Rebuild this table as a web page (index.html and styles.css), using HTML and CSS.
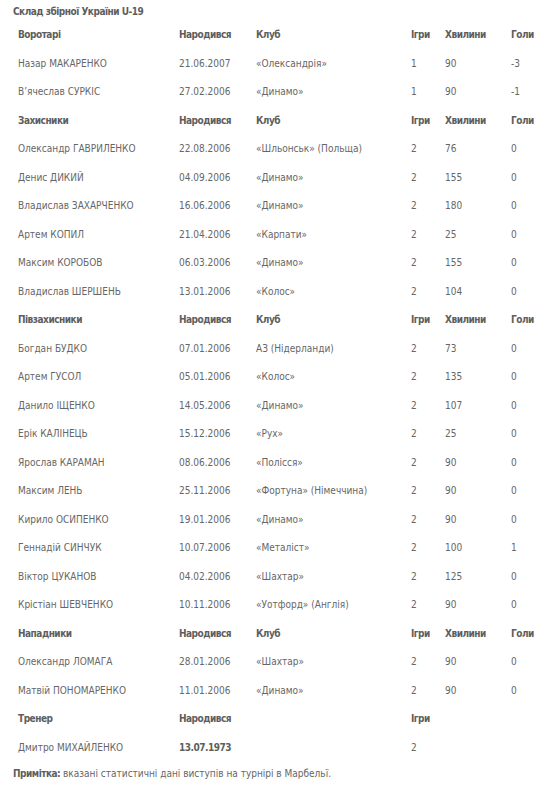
FILE: index.html
```html
<!DOCTYPE html>
<html lang="uk">
<head>
<meta charset="utf-8">
<link rel="stylesheet" href="styles.css">
</head>
<body>
<div class="page">
  <div class="title">Склад збірної України U-19</div>
  <div class="squad">
    <div class="row head"><span>Воротарі</span><span>Народився</span><span>Клуб</span><span>Ігри</span><span>Хвилини</span><span>Голи</span></div>
    <div class="row"><span>Назар МАКАРЕНКО</span><span>21.06.2007</span><span>«Олександрія»</span><span>1</span><span>90</span><span>-3</span></div>
    <div class="row"><span>В’ячеслав СУРКІС</span><span>27.02.2006</span><span>«Динамо»</span><span>1</span><span>90</span><span>-1</span></div>
    <div class="row head"><span>Захисники</span><span>Народився</span><span>Клуб</span><span>Ігри</span><span>Хвилини</span><span>Голи</span></div>
    <div class="row"><span>Олександр ГАВРИЛЕНКО</span><span>22.08.2006</span><span>«Шльонськ» (Польща)</span><span>2</span><span>76</span><span>0</span></div>
    <div class="row"><span>Денис ДИКИЙ</span><span>04.09.2006</span><span>«Динамо»</span><span>2</span><span>155</span><span>0</span></div>
    <div class="row"><span>Владислав ЗАХАРЧЕНКО</span><span>16.06.2006</span><span>«Динамо»</span><span>2</span><span>180</span><span>0</span></div>
    <div class="row"><span>Артем КОПИЛ</span><span>21.04.2006</span><span>«Карпати»</span><span>2</span><span>25</span><span>0</span></div>
    <div class="row"><span>Максим КОРОБОВ</span><span>06.03.2006</span><span>«Динамо»</span><span>2</span><span>155</span><span>0</span></div>
    <div class="row"><span>Владислав ШЕРШЕНЬ</span><span>13.01.2006</span><span>«Колос»</span><span>2</span><span>104</span><span>0</span></div>
    <div class="row head"><span>Півзахисники</span><span>Народився</span><span>Клуб</span><span>Ігри</span><span>Хвилини</span><span>Голи</span></div>
    <div class="row"><span>Богдан БУДКО</span><span>07.01.2006</span><span>АЗ (Нідерланди)</span><span>2</span><span>73</span><span>0</span></div>
    <div class="row"><span>Артем ГУСОЛ</span><span>05.01.2006</span><span>«Колос»</span><span>2</span><span>135</span><span>0</span></div>
    <div class="row"><span>Данило ІЩЕНКО</span><span>14.05.2006</span><span>«Динамо»</span><span>2</span><span>107</span><span>0</span></div>
    <div class="row"><span>Ерік КАЛІНЕЦЬ</span><span>15.12.2006</span><span>«Рух»</span><span>2</span><span>25</span><span>0</span></div>
    <div class="row"><span>Ярослав КАРАМАН</span><span>08.06.2006</span><span>«Полісся»</span><span>2</span><span>90</span><span>0</span></div>
    <div class="row"><span>Максим ЛЕНЬ</span><span>25.11.2006</span><span>«Фортуна» (Німеччина)</span><span>2</span><span>90</span><span>0</span></div>
    <div class="row"><span>Кирило ОСИПЕНКО</span><span>19.01.2006</span><span>«Динамо»</span><span>2</span><span>90</span><span>0</span></div>
    <div class="row"><span>Геннадій СИНЧУК</span><span>10.07.2006</span><span>«Металіст»</span><span>2</span><span>100</span><span>1</span></div>
    <div class="row"><span>Віктор ЦУКАНОВ</span><span>04.02.2006</span><span>«Шахтар»</span><span>2</span><span>125</span><span>0</span></div>
    <div class="row"><span>Крістіан ШЕВЧЕНКО</span><span>10.11.2006</span><span>«Уотфорд» (Англія)</span><span>2</span><span>90</span><span>0</span></div>
    <div class="row head"><span>Нападники</span><span>Народився</span><span>Клуб</span><span>Ігри</span><span>Хвилини</span><span>Голи</span></div>
    <div class="row"><span>Олександр ЛОМАГА</span><span>28.01.2006</span><span>«Шахтар»</span><span>2</span><span>90</span><span>0</span></div>
    <div class="row"><span>Матвій ПОНОМАРЕНКО</span><span>11.01.2006</span><span>«Динамо»</span><span>2</span><span>90</span><span>0</span></div>
    <div class="row head"><span>Тренер</span><span>Народився</span><span></span><span>Ігри</span><span></span><span></span></div>
    <div class="row"><span>Дмитро МИХАЙЛЕНКО</span><span class="bold">13.07.1973</span><span></span><span>2</span><span></span><span></span></div>
  </div>
  <p class="note"><b>Примітка:</b> вказані статистичні дані виступів на турнірі в Марбельї.</p>
</div>
</body>
</html>
```

FILE: styles.css
```css
html, body {
  margin: 0;
  padding: 0;
  background: #ffffff;
}
body {
  font-family: "DejaVu Sans Condensed", "DejaVu Sans", Verdana, sans-serif;
  font-stretch: condensed;
  font-size: 10px;
  color: #666666;
}
.page {
  padding: 4px 0 0 13px;
  width: 542px;
}
.title {
  font-weight: bold;
  letter-spacing: -0.5px;
  line-height: 16px;
  color: #5e5e5e;
}
.squad {
  margin-top: 1px;
  padding-left: 5px;
}
.row {
  display: grid;
  grid-template-columns: 161px 77px 155px 34px 66px 1fr;
  height: 28.5px;
  align-items: center;
  line-height: 16px;
  white-space: nowrap;
}
.row.head {
  font-weight: bold;
  letter-spacing: -0.5px;
  color: #5e5e5e;
}
.bold {
  font-weight: bold;
  letter-spacing: -0.5px;
  color: #5e5e5e;
}
.note {
  margin: 4px 0 0 0;
  line-height: 16px;
}
.note b {
  letter-spacing: -0.5px;
  color: #5e5e5e;
}
```
